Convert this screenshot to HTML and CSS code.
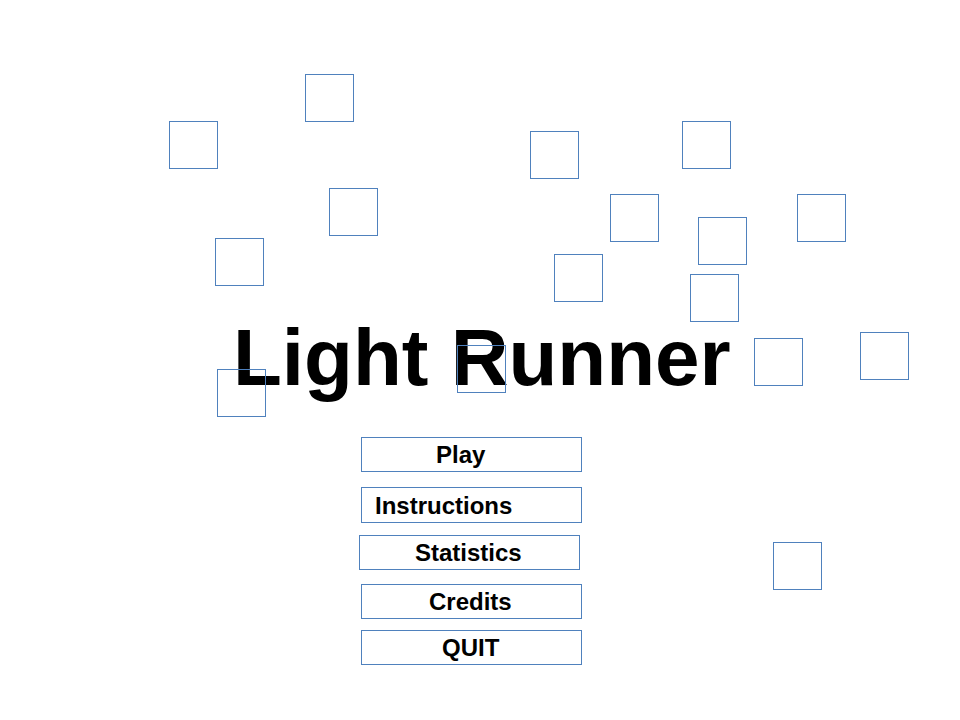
FILE: index.html
```html
<!DOCTYPE html>
<html lang="en">
<head>
<meta charset="utf-8">
<title>Light Runner</title>
<link rel="stylesheet" href="styles.css">
</head>
<body>
<div class="stage">
  <main class="menu">
    <h1 class="title">Light Runner</h1>
    <nav class="buttons">
      <div class="btn btn-play"><span>Play</span></div>
      <div class="btn btn-instructions"><span>Instructions</span></div>
      <div class="btn btn-statistics"><span>Statistics</span></div>
      <div class="btn btn-credits"><span>Credits</span></div>
      <div class="btn btn-quit"><span>QUIT</span></div>
    </nav>
  </main>
  <div class="lights">
    <div class="light" style="left:305px;top:74px"></div>
    <div class="light" style="left:169px;top:121px"></div>
    <div class="light" style="left:530px;top:131px"></div>
    <div class="light" style="left:682px;top:121px"></div>
    <div class="light" style="left:329px;top:188px"></div>
    <div class="light" style="left:610px;top:194px"></div>
    <div class="light" style="left:797px;top:194px"></div>
    <div class="light" style="left:698px;top:217px"></div>
    <div class="light" style="left:215px;top:238px"></div>
    <div class="light" style="left:554px;top:254px"></div>
    <div class="light" style="left:690px;top:274px"></div>
    <div class="light" style="left:754px;top:338px"></div>
    <div class="light" style="left:860px;top:332px"></div>
    <div class="light" style="left:217px;top:369px"></div>
    <div class="light" style="left:457px;top:345px"></div>
    <div class="light" style="left:773px;top:542px"></div>
  </div>
</div>
</body>
</html>
```

FILE: styles.css
```css
* {
  box-sizing: border-box;
}

html, body {
  margin: 0;
  padding: 0;
  background: #ffffff;
}

body {
  font-family: "Liberation Sans", Arial, sans-serif;
  color: #000000;
}

.stage {
  position: relative;
  width: 960px;
  height: 720px;
  overflow: hidden;
  background: #ffffff;
}

.menu {
  display: flex;
  flex-direction: column;
  padding-top: 312px;
}

.title {
  margin: 0 0 0 233px;
  font-size: 80px;
  font-weight: bold;
  line-height: 92px;
  height: 92px;
  white-space: nowrap;
}

.buttons {
  display: flex;
  flex-direction: column;
  align-items: flex-start;
  padding-left: 361px;
}

.btn {
  width: 221px;
  height: 35px;
  border: 1px solid #4f81bd;
  display: flex;
  align-items: center;
  font-size: 24px;
  font-weight: bold;
  line-height: 27px;
  white-space: nowrap;
}

.btn-play {
  margin-top: 33px;
  padding-left: 74px;
}

.btn-instructions {
  margin-top: 15px;
  height: 36px;
  padding-left: 13px;
}

.btn-statistics {
  margin-top: 12px;
  margin-left: -2px;
  padding-left: 55px;
}

.btn-credits {
  margin-top: 14px;
  padding-left: 67px;
}

.btn-quit {
  margin-top: 11px;
  padding-left: 80px;
}

.lights {
  position: absolute;
  inset: 0;
  pointer-events: none;
}

.light {
  position: absolute;
  width: 49px;
  height: 48px;
  border: 1px solid #4f81bd;
}
```
